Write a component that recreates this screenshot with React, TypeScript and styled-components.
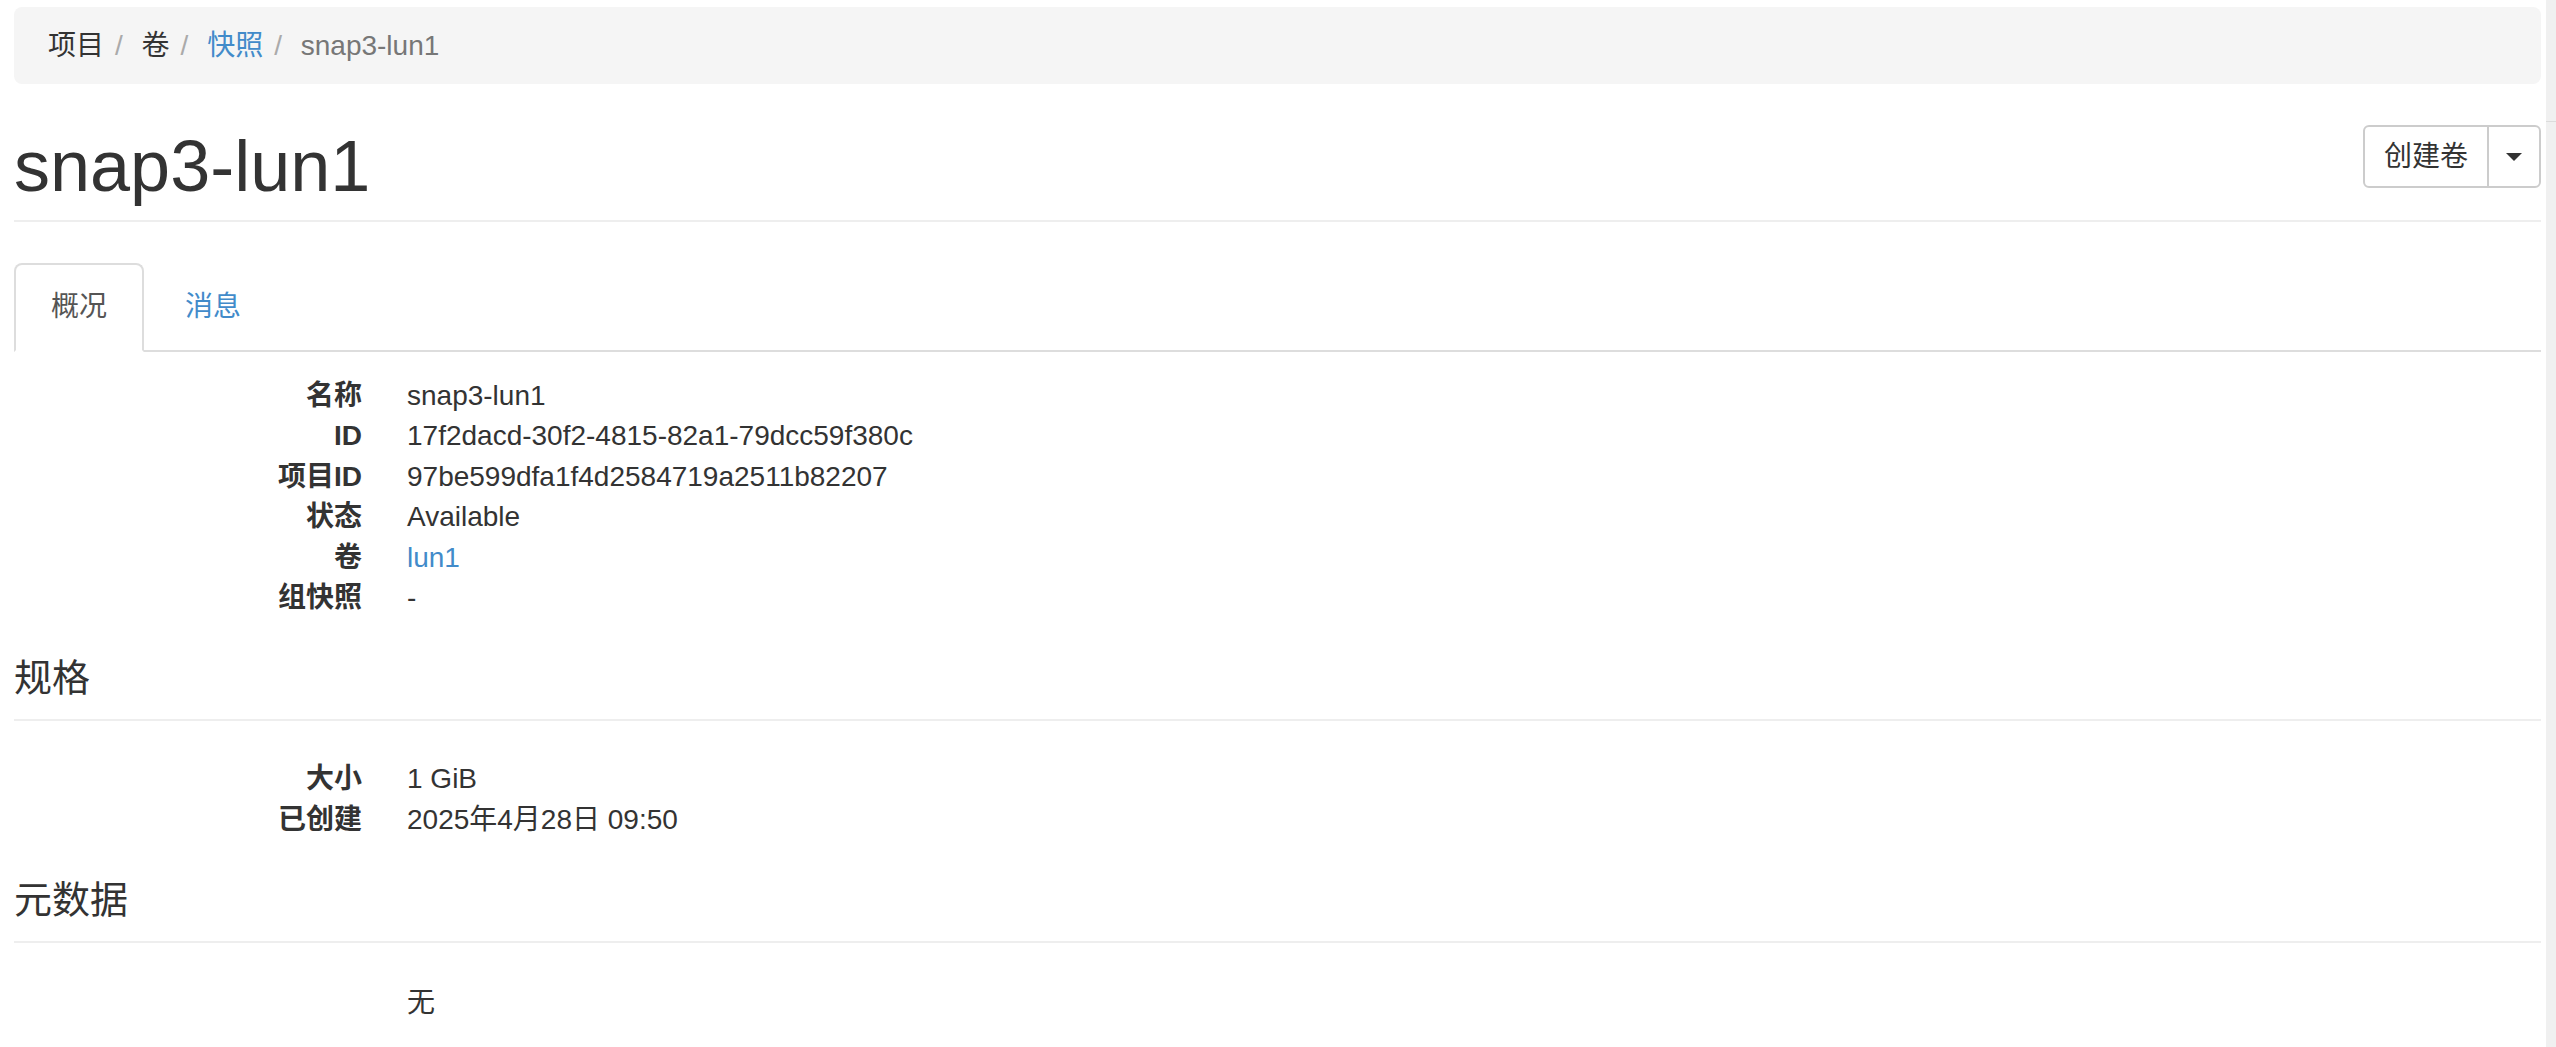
import styled, { createGlobalStyle } from 'styled-components'

const GlobalStyle = createGlobalStyle`
  html, body {
    margin: 0;
    padding: 0;
    background: #fff;
  }
  body {
    font-family: "Liberation Sans", "Noto Sans CJK SC", sans-serif;
    font-size: 28px;
    line-height: 40px;
    color: #333;
  }
  * {
    box-sizing: border-box;
  }
`

const Shell = styled.div`
  display: flex;
  min-height: 100vh;
`

const Main = styled.main`
  flex: 1;
  min-width: 0;
  padding: 7px 5px 0 14px;
`

const ScrollTrack = styled.div`
  width: 10px;
  flex-shrink: 0;
  background: #f0f0f0;
`

const ScrollThumb = styled.div`
  height: 122px;
  border-bottom: 1px solid #dcdcdc;
`

const Breadcrumb = styled.ol`
  display: flex;
  align-items: center;
  height: 77px;
  margin: 0;
  padding: 0 34px;
  list-style: none;
  background: #f5f5f5;
  border-radius: 8px;

  & > li + li::before {
    content: '/\\00a0';
    padding: 0 11px;
    color: #aaa;
  }
`

const Crumb = styled.li<{ $tone: 'plain' | 'link' | 'active' }>`
  color: ${({ $tone }) =>
    $tone === 'link' ? '#428bca' : $tone === 'active' ? '#777' : '#333'};
`

const HeaderRow = styled.div`
  display: flex;
  justify-content: space-between;
  align-items: flex-start;
  margin-top: 43px;
  padding-bottom: 14px;
  border-bottom: 2px solid #eee;
`

const Title = styled.h1`
  margin: 0;
  font-size: 72px;
  line-height: 79px;
  font-weight: 400;
  color: #333;
`

const ButtonGroup = styled.div`
  display: flex;
  margin-top: -2px;
  height: 63px;
  border: 2px solid #ccc;
  border-radius: 6px;
  background: #fff;
`

const GroupButton = styled.button`
  display: flex;
  align-items: center;
  justify-content: center;
  padding: 0 19px;
  border: none;
  background: transparent;
  font: inherit;
  color: #333;
  cursor: pointer;

  & + & {
    border-left: 2px solid #ccc;
    padding: 0 17px;
  }
`

const Caret = styled.span`
  width: 0;
  height: 0;
  border-top: 8px solid #333;
  border-left: 8px solid transparent;
  border-right: 8px solid transparent;
`

const TabBar = styled.ul`
  display: flex;
  margin: 41px 0 0;
  padding: 0;
  list-style: none;
  border-bottom: 2px solid #ddd;
`

const Tab = styled.li<{ $active?: boolean }>`
  margin: 0 4px -2px 0;
  padding: 22px 35px 23px;
  border: 2px solid ${({ $active }) => ($active ? '#ddd' : 'transparent')};
  border-bottom-color: ${({ $active }) => ($active ? '#fff' : 'transparent')};
  border-radius: 8px 8px 0 0;
  background: ${({ $active }) => ($active ? '#fff' : 'transparent')};
  color: ${({ $active }) => ($active ? '#555' : '#428bca')};
  cursor: pointer;
`

const DetailList = styled.dl<{ $top: number }>`
  display: grid;
  grid-template-columns: 348px 1fr;
  column-gap: 45px;
  margin: ${({ $top }) => $top}px 0 0;
`

const Term = styled.dt`
  text-align: right;
  font-weight: 700;
  line-height: 40.4px;
`

const Value = styled.dd<{ $link?: boolean }>`
  margin: 0;
  line-height: 40.4px;
  color: ${({ $link }) => ($link ? '#428bca' : '#333')};
`

const SectionHeading = styled.h3`
  margin: 38px 0 0;
  padding-bottom: 19px;
  font-size: 38px;
  line-height: 44px;
  font-weight: 400;
  color: #333;
  border-bottom: 2px solid #eee;
`

type Row = { label: string; value: string; link?: boolean }

const overview: Row[] = [
  { label: '名称', value: 'snap3-lun1' },
  { label: 'ID', value: '17f2dacd-30f2-4815-82a1-79dcc59f380c' },
  { label: '项目ID', value: '97be599dfa1f4d2584719a2511b82207' },
  { label: '状态', value: 'Available' },
  { label: '卷', value: 'lun1', link: true },
  { label: '组快照', value: '-' },
]

const specs: Row[] = [
  { label: '大小', value: '1 GiB' },
  { label: '已创建', value: '2025年4月28日 09:50' },
]

const metadata: Row[] = [{ label: '', value: '无' }]

function Details({ rows, top }: { rows: Row[]; top: number }) {
  return (
    <DetailList $top={top}>
      {rows.map((r, i) => (
        <div key={i} style={{ display: 'contents' }}>
          <Term>{r.label}</Term>
          <Value $link={r.link}>{r.value}</Value>
        </div>
      ))}
    </DetailList>
  )
}

export default function App() {
  return (
    <>
      <GlobalStyle />
      <Shell>
        <Main>
          <Breadcrumb>
            <Crumb $tone="plain">项目</Crumb>
            <Crumb $tone="plain">卷</Crumb>
            <Crumb $tone="link">快照</Crumb>
            <Crumb $tone="active">snap3-lun1</Crumb>
          </Breadcrumb>

          <HeaderRow>
            <Title>snap3-lun1</Title>
            <ButtonGroup>
              <GroupButton type="button">创建卷</GroupButton>
              <GroupButton type="button" aria-label="更多">
                <Caret />
              </GroupButton>
            </ButtonGroup>
          </HeaderRow>

          <TabBar>
            <Tab $active>概况</Tab>
            <Tab>消息</Tab>
          </TabBar>

          <Details rows={overview} top={24} />

          <SectionHeading>规格</SectionHeading>
          <Details rows={specs} top={38} />

          <SectionHeading>元数据</SectionHeading>
          <Details rows={metadata} top={40} />
        </Main>
        <ScrollTrack>
          <ScrollThumb />
        </ScrollTrack>
      </Shell>
    </>
  )
}
